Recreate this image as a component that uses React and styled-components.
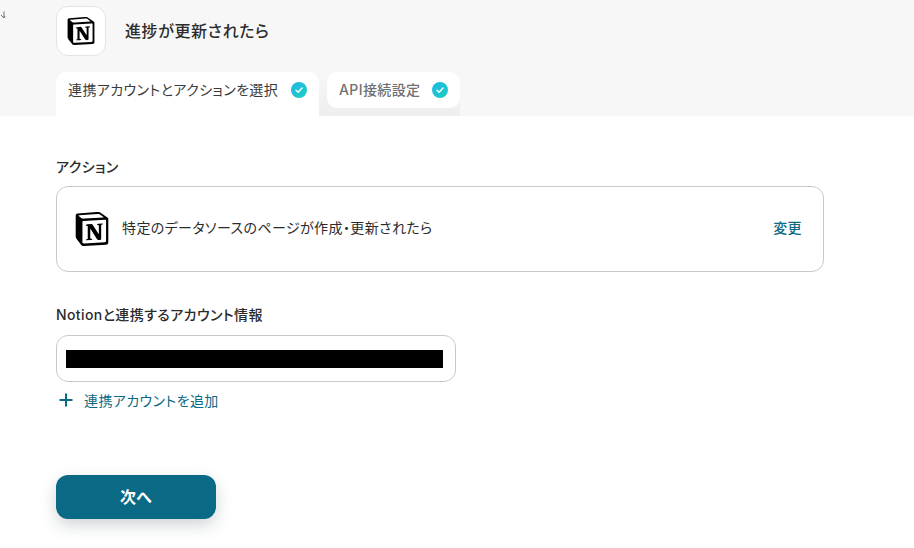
import React from "react";
import styled, { createGlobalStyle } from "styled-components";

const Global = createGlobalStyle`
  html, body { margin: 0; padding: 0; background: #fff; }
  body {
    font-family: Inter, "Noto Sans CJK JP", sans-serif;
    font-feature-settings: "palt";
    color: #2b2b2b;
    overflow: hidden;
  }
  * { box-sizing: border-box; }
`;

const Page = styled.div`
  width: 914px;
  height: 548px;
  position: relative;
  overflow: hidden;
`;

const Header = styled.header`
  height: 116px;
  background: #f7f7f7;
  padding: 6px 0 0 56px;
  display: flex;
  flex-direction: column;
`;

const TitleRow = styled.div`
  display: flex;
  align-items: center;
  gap: 19px;
  height: 50px;
`;

const AppTile = styled.div`
  width: 50px;
  height: 50px;
  border-radius: 12px;
  background: #fff;
  border: 1px solid #e4e4e4;
  display: flex;
  align-items: center;
  justify-content: center;
`;

const Title = styled.h1`
  margin: -2px 0 0;
  font-size: 16px;
  font-weight: 500;
  letter-spacing: 0.6px;
  color: #2c2c2c;
`;

const Tabs = styled.div`
  margin-top: 16px;
  height: 44px;
  display: flex;
  background: linear-gradient(#f7f7f7 0, #eeeeee 100%);
  width: 404px;
`;

const Tab = styled.div`
  height: ${(p) => (p.$active ? "44px" : "36px")};
  width: ${(p) => p.$width}px;
  margin-right: ${(p) => (p.$active ? "8px" : "0")};
  background: #fff;
  border-radius: ${(p) => (p.$active ? "10px 10px 0 0" : "10px")};
  display: flex;
  align-items: flex-start;
  justify-content: space-between;
  padding: 9px 12px 0 12px;
  font-size: 14px;
  line-height: 18px;
  letter-spacing: 0.4px;
  white-space: nowrap;
  color: ${(p) => (p.$active ? "#3a3a3a" : "#707070")};
  font-weight: ${(p) => (p.$active ? 400 : 500)};
`;

const Check = styled.span`
  width: 16px;
  height: 16px;
  border-radius: 50%;
  margin-top: 1px;
  background: linear-gradient(135deg, #1fb6e8, #1fd0bd);
  display: flex;
  align-items: center;
  justify-content: center;
`;

const Content = styled.main`
  padding: 41px 0 0 56px;
`;

const Label = styled.div`
  font-size: 14px;
  line-height: 20px;
  font-weight: 500;
  letter-spacing: 0.4px;
  color: #2b2b2b;
`;

const ActionCard = styled.div`
  margin-top: 9px;
  width: 768px;
  height: 86px;
  border: 1px solid #c9c9c9;
  border-radius: 12px;
  display: flex;
  align-items: center;
  padding: 0 21px 0 18px;
`;

const ActionText = styled.span`
  margin: -4px 0 0 13px;
  flex: 1;
  font-size: 14px;
  letter-spacing: 0.4px;
  color: #2b2b2b;
`;

const LinkText = styled.span`
  font-size: 14px;
  color: #0a6a85;
  letter-spacing: 0.4px;
`;

const ChangeLink = styled(LinkText)`
  margin-top: -4px;
  font-weight: 500;
`;

const AccountLabel = styled(Label)`
  margin-top: 33px;
`;

const Select = styled.div`
  margin-top: 10px;
  width: 400px;
  height: 47px;
  border: 1px solid #c9c9c9;
  border-radius: 12px;
  display: flex;
  align-items: center;
  padding: 0 12px 0 9px;
`;

const Redaction = styled.div`
  width: 100%;
  height: 18px;
  background: #000;
`;

const AddRow = styled.div`
  margin-top: 8px;
  display: flex;
  align-items: center;
  gap: 10px;
  height: 20px;
  padding-left: 2px;
`;

const AddText = styled(LinkText)`
  margin-top: -1px;
`;

const NextButton = styled.button`
  margin-top: 65px;
  display: block;
  width: 160px;
  height: 44px;
  border: 0;
  border-radius: 12px;
  background: #0a6a85;
  color: #fff;
  padding: 0 0 3px;
  font: 700 16px Inter, "Noto Sans CJK JP", sans-serif;
  box-shadow: 0 6px 16px rgba(40, 60, 70, 0.22);
`;

const Corner = styled.svg`
  position: absolute;
  left: 0;
  top: 11px;
`;

const NotionLogo = ({ size }) => (
  <svg width={size} height={size} viewBox="0 0 24 24" aria-hidden="true">
    <path
      fill="#000"
      d="M4.459 4.208c.746.606 1.026.56 2.428.466l13.215-.793c.28 0 .047-.28-.046-.326L17.86 1.968c-.42-.326-.981-.7-2.055-.607L3.01 2.295c-.466.046-.56.28-.374.466zm.793 3.08v13.904c0 .747.373 1.027 1.214.98l14.523-.84c.841-.046.935-.56.935-1.167V6.354c0-.606-.233-.933-.748-.887l-15.177.887c-.56.047-.747.327-.747.933zm14.337.745c.093.42 0 .84-.42.888l-.7.14v10.264c-.608.327-1.168.514-1.635.514-.748 0-.935-.234-1.495-.933l-4.577-7.186v6.952L12.21 19s0 .84-1.168.84l-3.222.186c-.093-.186 0-.653.327-.746l.84-.233V9.854L7.822 9.76c-.094-.42.14-1.026.793-1.073l3.456-.233 4.764 7.279v-6.44l-1.215-.139c-.093-.514.28-.887.747-.933zM1.936 1.035l13.31-.98c1.634-.14 2.055-.047 3.082.7l4.249 2.986c.7.513.934.653.934 1.213v16.378c0 1.026-.373 1.634-1.68 1.726l-15.458.934c-.98.047-1.448-.093-1.962-.747l-3.129-4.06c-.56-.747-.793-1.306-.793-1.96V2.667c0-.839.374-1.54 1.447-1.632z"
    />
  </svg>
);

const CheckMark = () => (
  <svg width="10" height="10" viewBox="0 0 10 10" fill="none" aria-hidden="true">
    <path d="M2 5.2 L4.2 7.2 L8 3" stroke="#fff" strokeWidth="1.4" strokeLinecap="round" strokeLinejoin="round" />
  </svg>
);

export default function App() {
  return (
    <Page>
      <Global />
      <Corner width="6" height="8" viewBox="0 0 6 8" fill="none" aria-hidden="true">
        <path d="M4 0.5 V6 M1 4 L4 7 L5 5" stroke="#6f6f6f" strokeWidth="1" />
      </Corner>
      <Header>
        <TitleRow>
          <AppTile>
            <NotionLogo size={28} />
          </AppTile>
          <Title>進捗が更新されたら</Title>
        </TitleRow>
        <Tabs>
          <Tab $active $width={263}>
            連携アカウントとアクションを選択
            <Check><CheckMark /></Check>
          </Tab>
          <Tab $width={133}>
            API接続設定
            <Check><CheckMark /></Check>
          </Tab>
        </Tabs>
      </Header>
      <Content>
        <Label>アクション</Label>
        <ActionCard>
          <NotionLogo size={34} />
          <ActionText>特定のデータソースのページが作成・更新されたら</ActionText>
          <ChangeLink>変更</ChangeLink>
        </ActionCard>
        <AccountLabel>Notionと連携するアカウント情報</AccountLabel>
        <Select>
          <Redaction />
        </Select>
        <AddRow>
          <svg width="16" height="16" viewBox="0 0 16 16" aria-hidden="true">
            <path d="M8 1.5 V14.5 M1.5 8 H14.5" stroke="#0a6a85" strokeWidth="2" />
          </svg>
          <AddText>連携アカウントを追加</AddText>
        </AddRow>
        <NextButton>次へ</NextButton>
      </Content>
    </Page>
  );
}
